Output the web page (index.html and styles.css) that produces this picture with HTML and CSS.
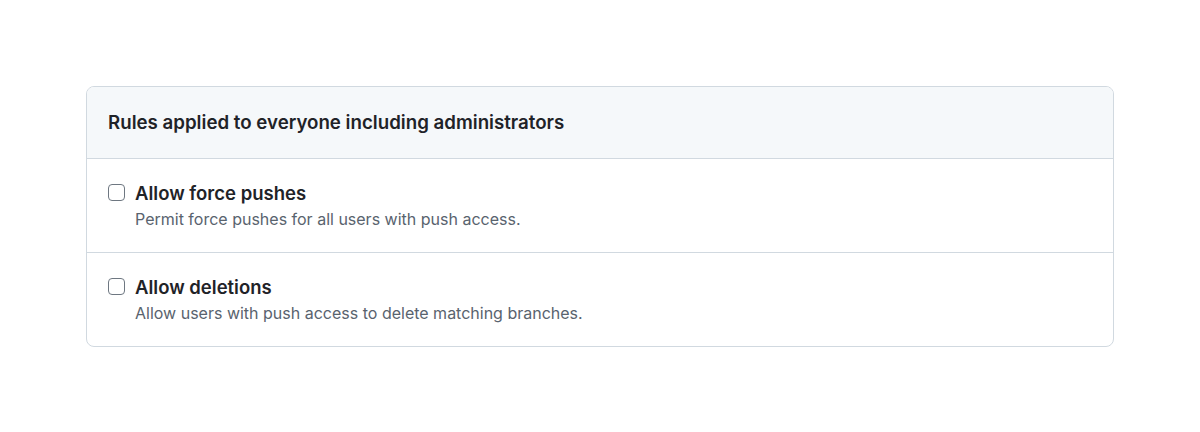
FILE: index.html
```html
<!DOCTYPE html>
<html>
<head>
<meta charset="utf-8">
<link rel="stylesheet" href="styles.css">
</head>
<body>
<div class="page">
  <div class="box">
    <div class="box-header">Rules applied to everyone including administrators</div>
    <div class="box-row">
      <span class="check"></span>
      <div class="row-body">
        <div class="row-title">Allow force pushes</div>
        <div class="row-desc">Permit force pushes for all users with push access.</div>
      </div>
    </div>
    <div class="box-row">
      <span class="check"></span>
      <div class="row-body">
        <div class="row-title">Allow deletions</div>
        <div class="row-desc">Allow users with push access to delete matching branches.</div>
      </div>
    </div>
  </div>
</div>
</body>
</html>
```
FILE: styles.css
```css
html, body { margin: 0; padding: 0; background: #ffffff; }
body { font-family: Inter, "Noto Sans", sans-serif; color: #1f2328; }
.page { padding: 86px 86px 0 86px; }
.box {
  border: 1px solid #d1d9e0;
  border-radius: 8px;
  overflow: hidden;
}
.box-header {
  background: #f5f8fa;
  border-bottom: 1px solid #d1d9e0;
  padding: 0 21px;
  height: 71px;
  display: flex;
  align-items: center;
  font-size: 18.7px;
  font-weight: 600;
}
.box-row {
  display: flex;
  gap: 10px;
  padding: 22px 22px 20px 22px;
  border-top: 1px solid #d1d9e0;
}
.box-header + .box-row { border-top: none; }
.check {
  flex: none;
  width: 15px;
  height: 15px;
  margin-top: 3px;
  margin-left: -1px;
  border: 1.5px solid #6e7781;
  border-radius: 4px;
  background: #fff;
}
.row-title { font-size: 18.5px; font-weight: 600; line-height: 24px; }
.row-desc { font-size: 16px; line-height: 26px; margin-top: 1px; color: #59636e; }
```
